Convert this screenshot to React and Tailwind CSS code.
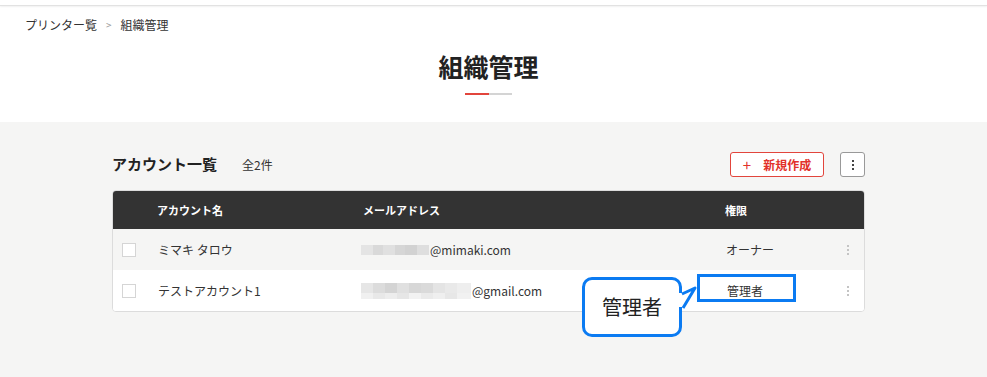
// 組織管理 — アカウント一覧
const FONT = { fontFamily: '"Noto Sans CJK JP", "Noto Sans", sans-serif' }

const BLUR_1 = [
  ['#e4e4e4', 12], ['#d9d9d9', 10], ['#e0e0e0', 12], ['#d6d6d6', 10], ['#d2d2d2', 12], ['#dedede', 12],
]
const BLUR_2_TOP = [
  ['#e6e6e6', 12], ['#dcdcdc', 12], ['#d4d4d4', 12], ['#e0e0e0', 12], ['#d7d7d7', 12], ['#dadada', 12], ['#e4e4e4', 12], ['#e9e9e9', 12], ['#eeeeee', 14],
]
const BLUR_2_BOT = [
  ['#f0f0f0', 12], ['#e8e8e8', 12], ['#ededed', 12], ['#e6e6e6', 12], ['#f2f2f2', 12], ['#eaeaea', 12], ['#efefef', 12], ['#e7e7e7', 12], ['#f1f1f1', 14],
]

function Mosaic({ rows }) {
  return (
    <div className="flex flex-col">
      {rows.map((r, i) => (
        <div key={i} className="flex" style={{ height: i === 0 ? 10 : 6 }}>
          {r.map(([c, w], j) => (
            <span key={j} className="block h-full" style={{ background: c, width: w }} />
          ))}
        </div>
      ))}
    </div>
  )
}

function Checkbox() {
  return <span className="block h-[14px] w-[14px] border border-[#d5d5d5] bg-white" />
}

function Dots({ color = 'bg-[#c4c4c4]' }) {
  return (
    <span className="flex flex-col items-center gap-[2px]">
      <span className={`block h-[2px] w-[2px] ${color}`} />
      <span className={`block h-[2px] w-[2px] ${color}`} />
      <span className={`block h-[2px] w-[2px] ${color}`} />
    </span>
  )
}

function Row({ name, email, mosaic, role, bg, highlight }) {
  return (
    <div className={`flex h-[41px] items-center text-[12px] text-[#333] ${bg}`}>
      <div className="flex w-[45px] pl-[9px]">
        <Checkbox />
      </div>
      <div className="w-[203px]">{name}</div>
      <div className="flex w-[365px] items-center">
        <Mosaic rows={mosaic} />
        <span className="ml-[1px]">{email}</span>
      </div>
      <div className="relative w-[110px]">
        {highlight ? (
          <>
            <span className="pl-[1px] text-[12px]">{role}</span>
            <span className="absolute left-[-29px] top-[-8px] h-[28px] w-[99px] border-[3px] border-[#0b7bf2]" />
          </>
        ) : (
          <span>{role}</span>
        )}
      </div>
      <div className="flex flex-1 justify-center pr-[4px]">
        <Dots />
      </div>
    </div>
  )
}

export default function App() {
  return (
    <div className="min-h-[377px] bg-[#f5f5f4]" style={FONT}>
      <div className="bg-white">
        <div className="h-[6px] border-b border-[#e2e2e2] shadow-[0_1px_2px_rgba(0,0,0,0.06)]" />
        <div className="w-[977px]">
          <div className="flex items-center gap-[9px] pl-[25px] pt-[10px] text-[12px] leading-[18px] text-[#333]">
            <span>プリンター覧</span>
            <span className="text-[10px] text-[#999]">&gt;</span>
            <span>組織管理</span>
          </div>
          <h1 className="mt-[15px] text-center text-[25px] font-bold leading-[34px] text-[#222]">組織管理</h1>
          <div className="mx-auto mt-[10px] flex h-[2px] w-[47px]">
            <span className="block h-full w-1/2 bg-[#e2453c]" />
            <span className="block h-full w-1/2 bg-[#d4d4d4]" />
          </div>
          <div className="h-[27px]" />
        </div>
      </div>

      <div className="w-[977px]">
        <div className="relative mx-auto w-[753px] pt-[30px]">
          <div className="flex h-[25px] items-center">
            <h2 className="w-[130px] text-[15px] font-bold text-[#222]">アカウント一覧</h2>
            <span className="text-[12px] text-[#333]">全2件</span>
            <button className="ml-auto flex h-[25px] w-[94px] items-center justify-center gap-[12px] rounded-[3px] border border-[#e2453c] bg-white text-[12px] font-bold text-[#e2312a]">
              <span className="text-[15px] font-normal leading-none">+</span>
              <span>新規作成</span>
            </button>
            <button className="ml-[16px] flex h-[25px] w-[25px] items-center justify-center rounded-[3px] border border-[#999] bg-white">
              <Dots color="bg-[#444]" />
            </button>
          </div>

          <div className="mt-[13px] overflow-hidden rounded-[4px] border border-[#dcdcdc] bg-white">
            <div className="flex h-[38px] items-center bg-[#333] text-[11px] font-bold text-white">
              <div className="w-[44px]" />
              <div className="w-[206px]">アカウント名</div>
              <div className="w-[362px]">メールアドレス</div>
              <div>権限</div>
            </div>
            <Row
              name="ミマキ タロウ"
              email="@mimaki.com"
              mosaic={[BLUR_1]}
              role="オーナー"
              bg="bg-[#f5f5f4]"
            />
            <Row
              name="テストアカウント1"
              email="@gmail.com"
              mosaic={[BLUR_2_TOP, BLUR_2_BOT]}
              role="管理者"
              bg="bg-white"
              highlight
            />
          </div>

          {/* 吹き出し */}
          <div className="absolute left-[470px] top-[155px] flex h-[60px] w-[100px] items-center justify-center rounded-[10px] border-[3px] border-[#0b7bf2] bg-white text-[20px] text-[#222]">
            管理者
            <svg className="absolute left-[94px] top-[6px]" width="20" height="26" viewBox="0 0 20 26">
              <path d="M0 7 L4 7 L16 2 L4 21 L0 21 Z" fill="white" />
              <path d="M3 8 L16 2 L4 22" fill="none" stroke="#0b7bf2" strokeWidth="3" strokeLinejoin="round" />
            </svg>
          </div>
        </div>
      </div>
    </div>
  )
}
